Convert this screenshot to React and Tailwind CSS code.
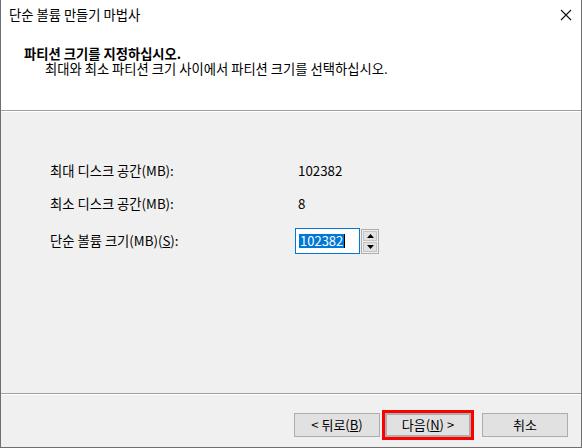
import React from "react";

const font = { fontFamily: '"Noto Sans CJK KR", "Noto Sans", sans-serif' };

function Btn({ children, className = "" }) {
  return (
    <div
      className={`w-[86px] h-[24px] bg-[#e1e1e1] border border-[#adadad] flex items-center justify-center text-[13px] text-black ${className}`}
    >
      {children}
    </div>
  );
}

export default function App() {
  return (
    <div
      className="w-[582px] h-[448px] bg-[#f0f0f0] border-x border-b border-[#6f6f6f] flex flex-col text-black text-[13.3px] leading-[16px]"
      style={font}
    >
      <div className="h-[111px] bg-white border-b border-[#a0a0a0] flex flex-col shrink-0">
        <div className="h-[30px] flex items-center justify-between pl-[8px] pr-[9px]">
          <span>단순 볼륨 만들기 마법사</span>
          <svg width="12" height="12" viewBox="0 0 12 12">
            <path d="M1 1 L11 11 M11 1 L1 11" stroke="#111" strokeWidth="1.1" />
          </svg>
        </div>
        <div className="pl-[23px] pt-[16px]">
          <div className="font-bold h-[15px] leading-[15px]">파티션 크기를 지정하십시오.</div>
          <div className="pl-[21px] h-[15px] leading-[15px]">최대와 최소 파티션 크기 사이에서 파티션 크기를 선택하십시오.</div>
        </div>
      </div>
      <div className="flex-1 border-t border-white border-b-[1px] border-b-[#a0a0a0] pl-[49px] pt-[49px] flex flex-col">
        <div className="h-[20px] flex items-center">
          <div className="w-[248px]">최대 디스크 공간(MB):</div>
          <div>102382</div>
        </div>
        <div className="h-[20px] flex items-center mt-[13px]">
          <div className="w-[248px]">최소 디스크 공간(MB):</div>
          <div>8</div>
        </div>
        <div className="h-[26px] flex items-center mt-[14px]">
          <div className="w-[245px]">
            단순 볼륨 크기(MB)(<span className="underline">S</span>):
          </div>
          <div className="w-[65px] h-[26px] bg-white border border-[#0078d7] flex items-center pl-[3px]">
            <span className="bg-[#0078d7] text-white h-[14px] leading-[14px] text-[13px] px-[1px]">102382</span>
            <span className="w-[1px] h-[14px] bg-black"></span>
          </div>
          <div className="w-[18px] h-[25px] ml-[1px] border border-[#adadad] bg-[#f0f0f0] flex flex-col p-[1px] gap-[1px]">
            <div className="flex-1 bg-[#e1e1e1] border border-[#c4c4c4] flex items-center justify-center">
              <svg width="7" height="4" viewBox="0 0 7 4"><path d="M3.5 0 L7 4 L0 4 Z" fill="#000" /></svg>
            </div>
            <div className="flex-1 bg-[#e1e1e1] border border-[#c4c4c4] flex items-center justify-center">
              <svg width="7" height="4" viewBox="0 0 7 4"><path d="M0 0 L7 0 L3.5 4 Z" fill="#000" /></svg>
            </div>
          </div>
        </div>
      </div>
      <div className="h-[53px] border-t border-white shrink-0 flex justify-end items-start pt-[15px] pr-[13px]">
        <div className="flex items-center h-[30px]">
          <Btn className="mr-[2px]">
            &lt; 뒤로(<span className="underline">B</span>)
          </Btn>
          <div className="border-[3px] border-[#ff0000]">
            <Btn className="border-2 border-[#0078d7]">
              다음(<span className="underline">N</span>) &gt;
            </Btn>
          </div>
          <Btn className="ml-[8px]">취소</Btn>
        </div>
      </div>
    </div>
  );
}
